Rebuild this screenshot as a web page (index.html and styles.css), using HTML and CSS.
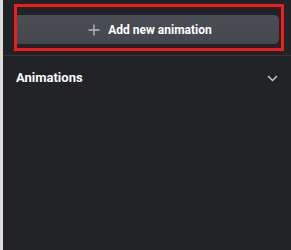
FILE: index.html
```html
<!DOCTYPE html>
<html lang="en">
<head>
<meta charset="UTF-8">
<meta name="viewport" content="width=device-width, initial-scale=1.0">
<title>Animations</title>
<link rel="stylesheet" href="styles.css">
</head>
<body>
    <div class="app">
        <div class="gutter"></div>
        <div class="panel">
            <div class="toolbar">
                <div class="highlight">
                    <button class="add-button" type="button">
                        <svg class="plus" width="12" height="12" viewBox="0 0 12 12">
                            <path d="M6 0.5V11.5M0.5 6H11.5" stroke="#b4b6ba" stroke-width="1.4" fill="none"/>
                        </svg>
                        <span>Add new animation</span>
                    </button>
                </div>
            </div>
            <div class="section-header">
                <span class="section-title">Animations</span>
                <svg class="chevron" width="11" height="7" viewBox="0 0 11 7">
                    <path d="M1 1L5.5 5.5L10 1" stroke="#c8c9cc" stroke-width="1.5" fill="none"/>
                </svg>
            </div>
        </div>
    </div>
</body>
</html>
```

FILE: styles.css
```css
html, body {
    margin: 0;
    height: 100%;
}

body {
    font-family: Roboto, "Liberation Sans", sans-serif;
    background-color: #222326;
    color: #fff;
}

.app {
    display: flex;
    height: 100%;
}

.gutter {
    width: 3px;
    background-color: #dcdcdc;
}

.panel {
    flex: 1;
    background-color: #222326;
}

.toolbar {
    padding: 4px 7px 4px 11px;
    border-bottom: 1px solid #35363a;
}

.highlight {
    border: 3px solid #f41a1a;
    padding: 8px 2px 4px 0;
}

.add-button {
    width: 100%;
    height: 29px;
    display: flex;
    align-items: center;
    justify-content: center;
    gap: 8px;
    border: none;
    border-radius: 0 5px 5px 0;
    background: linear-gradient(#4a4d55, #45484f);
    color: #fff;
    font-family: inherit;
    font-size: 12px;
    font-weight: bold;
    padding: 0 0 0 4px;
    cursor: pointer;
}

.plus {
    display: block;
}

.section-header {
    display: flex;
    align-items: center;
    justify-content: space-between;
    padding: 14px 13px 8px 13px;
}

.section-title {
    font-size: 13px;
    font-weight: bold;
}

.chevron {
    display: block;
    margin-top: 2px;
}
```
